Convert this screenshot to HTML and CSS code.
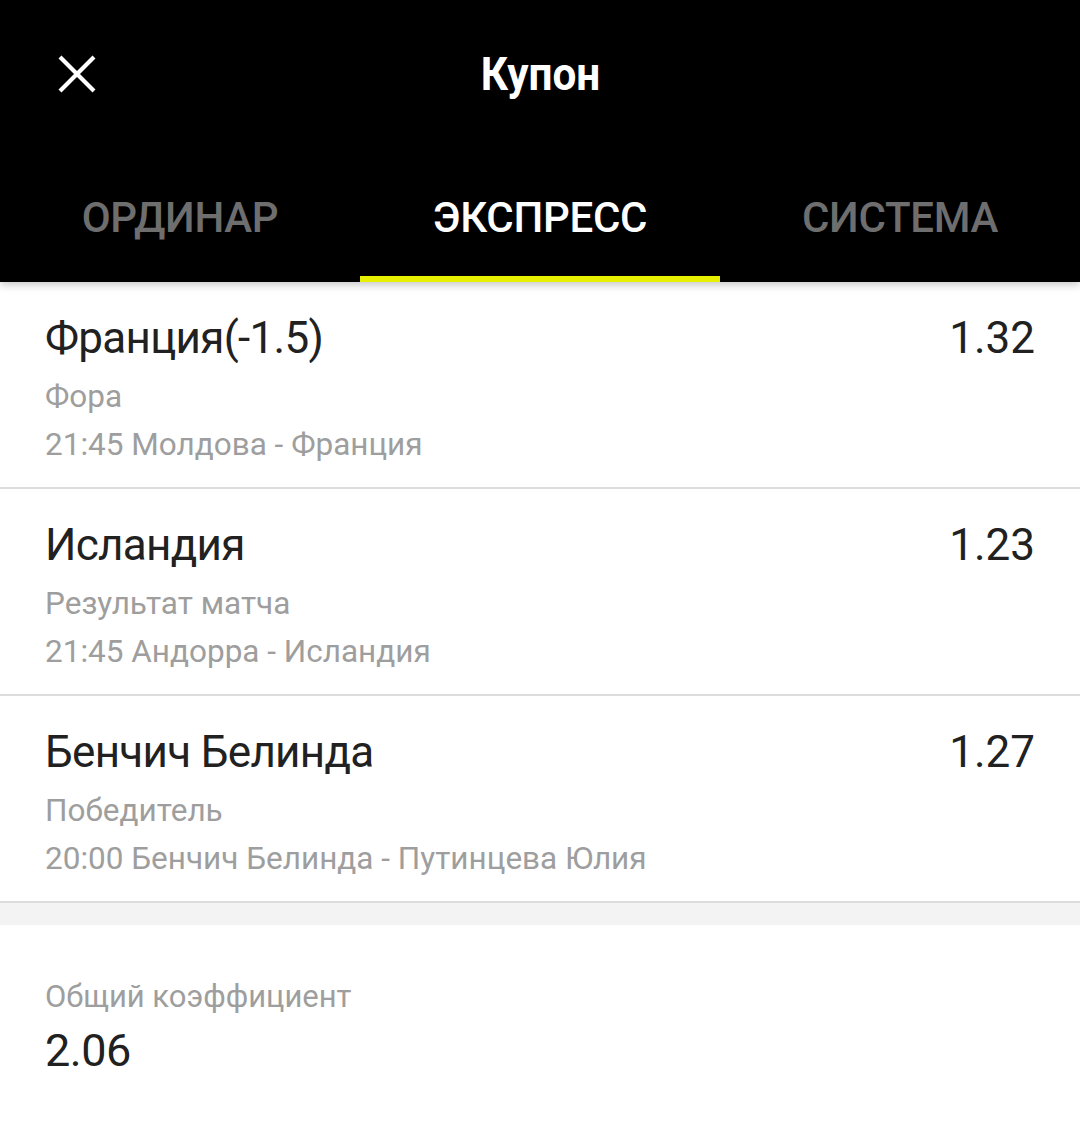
FILE: index.html
```html
<!DOCTYPE html>
<html lang="ru">
<head>
<meta charset="utf-8">
<title>Купон</title>
<link rel="stylesheet" href="styles.css">
</head>
<body>
<header class="top">
  <div class="titlebar">
    <button class="close" aria-label="Закрыть">
      <svg width="38" height="38" viewBox="0 0 38 38"><path d="M2 2L36 36M36 2L2 36" stroke="#fff" stroke-width="4.2" stroke-linecap="butt"/></svg>
    </button>
    <h1 class="title">Купон</h1>
  </div>
  <nav class="tabs">
    <div class="tab">ОРДИНАР</div>
    <div class="tab active">ЭКСПРЕСС</div>
    <div class="tab">СИСТЕМА</div>
  </nav>
</header>
<main>
  <div class="bet">
    <div class="bet-info">
      <div class="bet-name">Франция(-1.5)</div>
      <div class="bet-subs">
        <div class="bet-sub">Фора</div>
        <div class="bet-sub">21:45 Молдова - Франция</div>
      </div>
    </div>
    <div class="bet-odd">1.32</div>
  </div>
  <div class="bet">
    <div class="bet-info">
      <div class="bet-name">Исландия</div>
      <div class="bet-subs">
        <div class="bet-sub">Результат матча</div>
        <div class="bet-sub">21:45 Андорра - Исландия</div>
      </div>
    </div>
    <div class="bet-odd">1.23</div>
  </div>
  <div class="bet">
    <div class="bet-info">
      <div class="bet-name">Бенчич Белинда</div>
      <div class="bet-subs">
        <div class="bet-sub">Победитель</div>
        <div class="bet-sub">20:00 Бенчич Белинда - Путинцева Юлия</div>
      </div>
    </div>
    <div class="bet-odd">1.27</div>
  </div>
  <div class="spacer"></div>
  <div class="total">
    <div class="total-label">Общий коэффициент</div>
    <div class="total-value">2.06</div>
  </div>
</main>
</body>
</html>
```
FILE: styles.css
```css
* { box-sizing: border-box; }
html, body { margin: 0; padding: 0; }
body {
  width: 1080px;
  height: 1122px;
  overflow: hidden;
  background: #fff;
  font-family: Roboto, "Noto Sans", sans-serif;
  color: #212121;
}
.top {
  background: #000;
  position: relative;
  z-index: 2;
  box-shadow: 0 3px 8px rgba(0,0,0,0.22);
}
.titlebar {
  height: 150px;
  display: flex;
  align-items: flex-start;
  justify-content: center;
  position: relative;
}
.close {
  position: absolute;
  left: 58px;
  top: 55px;
  width: 38px;
  height: 38px;
  padding: 0;
  border: 0;
  background: none;
  display: block;
}
.close svg { display: block; }
.title {
  margin: 0;
  padding-top: 46px;
  font-size: 47px;
  line-height: 56px;
  font-weight: 700;
  color: #fff;
  transform: scaleX(0.9);
}
.tabs {
  display: grid;
  grid-template-columns: repeat(3, 1fr);
  height: 132px;
}
.tab {
  display: flex;
  justify-content: center;
  padding-top: 44px;
  font-size: 42px;
  line-height: 48px;
  font-weight: 500;
  color: #6e6e6e;
  letter-spacing: -0.3px;
  border-bottom: 6px solid transparent;
}
.tab.active {
  color: #fff;
  border-bottom-color: #e6f000;
}
main { position: relative; z-index: 1; }
.bet {
  display: flex;
  justify-content: space-between;
  align-items: flex-start;
  height: 207px;
  padding: 28px 45px 0 45px;
  border-bottom: 2px solid #dcdcdc;
}
.bet-name {
  font-size: 44px;
  line-height: 56px;
  color: #212121;
  letter-spacing: -0.7px;
}
.bet-subs {
  margin-top: 7px;
}
.bet-sub {
  font-size: 31.5px;
  line-height: 48px;
  color: #9e9e9e;
}
.bet-odd {
  font-size: 44px;
  line-height: 56px;
  color: #212121;
}
.spacer {
  height: 22px;
  background: #f3f3f3;
}
.total {
  padding: 50px 45px 0 45px;
}
.total-label {
  font-size: 31px;
  line-height: 44px;
  color: #9e9e9e;
}
.total-value {
  font-size: 45px;
  line-height: 64px;
  color: #212121;
  letter-spacing: -0.5px;
}
```
